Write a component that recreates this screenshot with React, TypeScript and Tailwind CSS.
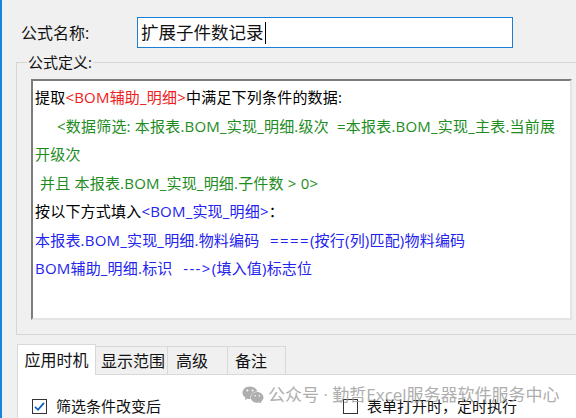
import { FaWeixin } from "react-icons/fa";

const RED = "text-[#f02020]";
const GREEN = "text-[#1e8c1e]";
const BLUE = "text-[#2323ee]";

function CheckBox({ checked }: { checked: boolean }) {
  return (
    <span className="flex h-[15px] w-[15px] items-center justify-center border border-[#333333] bg-white">
      {checked && (
        <svg width="13" height="13" viewBox="0 0 13 13">
          <path d="M2 6.8 L5 9.8 L11 2.8" fill="none" stroke="#0a62c4" strokeWidth="1.8" />
        </svg>
      )}
    </span>
  );
}

export default function App() {
  return (
    <div className="relative flex h-[418px] w-[576px] flex-col overflow-hidden border-l-2 border-[#1a82e2] bg-[#f0f0f0] font-['Open_Sans','Noto_Sans_CJK_SC',sans-serif] text-[#111111]">
      {/* name row */}
      <div className="flex items-center pl-[19px] pt-[17px]">
        <span className="w-[116px] text-[16px]">公式名称:</span>
        <div className="flex h-[31px] w-[376px] items-center border border-[#1a7fd6] bg-white pl-[3px] text-[17.5px]">
          <span>扩展子件数记录</span>
          <span className="ml-[1px] h-[22px] w-px bg-black" />
        </div>
      </div>

      {/* group box */}
      <fieldset className="mr-[-20px] ml-[14px] mt-[4px] border border-[#d6d6d6] px-0 pb-[14px] pt-[7px]">
        <legend className="ml-[10px] px-[1px] text-[15px] leading-[20px]">公式定义:</legend>
        <div className="ml-[14px] h-[241px] w-[541px] border-2 border-b-[#e4e4e4] border-l-[#7c7c7c] border-r-[#e4e4e4] border-t-[#7c7c7c] bg-white pl-[2px] pt-[2px] text-[15px] leading-[28.5px] tracking-[0.2px] text-black">
          <div className="whitespace-pre">
            提取<span className={RED}>&lt;BOM辅助_明细&gt;</span>中满足下列条件的数据:
          </div>
          <div className={`whitespace-pre pl-[22px] ${GREEN}`}>
            &lt;数据筛选: 本报表.BOM_实现_明细.级次  =本报表.BOM_实现_主表.当前展
          </div>
          <div className={GREEN}>开级次</div>
          <div className={`whitespace-pre pl-[5px] ${GREEN}`}>并且 本报表.BOM_实现_明细.子件数 &gt; 0&gt;</div>
          <div className="whitespace-pre">
            按以下方式填入<span className={BLUE}>&lt;BOM_实现_明细&gt;</span>：
          </div>
          <div className={`whitespace-pre ${BLUE}`}>
            本报表.BOM_实现_明细.物料编码<span className="tracking-[1.4px]">  ====</span>(按行(列)匹配)物料编码
          </div>
          <div className={`whitespace-pre ${BLUE}`}>
            BOM辅助_明细.标识<span className="tracking-[1.4px]">  ---&gt;</span>(填入值)标志位
          </div>
        </div>
      </fieldset>

      {/* tabs */}
      <div className="ml-[15px] mt-[9px] flex items-end text-[16px]">
        <div className="relative z-10 -mb-px flex h-[31px] w-[79px] items-center justify-center border border-b-0 border-[#d9d9d9] bg-white">
          应用时机
        </div>
        <div className="flex h-[28px] w-[72px] items-center border-r border-t border-[#d9d9d9] pl-[5px]">显示范围</div>
        <div className="flex h-[28px] w-[60px] items-center border-r border-t border-[#d9d9d9] pl-[8px]">高级</div>
        <div className="flex h-[28px] w-[58px] items-center border-r border-t border-[#d9d9d9] pl-[7px]">备注</div>
      </div>
      <div className="ml-[15px] flex-1 border-l border-t border-[#d9d9d9] bg-white pl-[14px] pt-[20px] text-[15px]">
        <div className="flex items-center">
          <div className="flex w-[311px] items-center gap-[9px]">
            <CheckBox checked />
            <span>筛选条件改变后</span>
          </div>
          <div className="flex items-center gap-[9px]">
            <CheckBox checked={false} />
            <span>表单打开时，定时执行</span>
          </div>
        </div>
      </div>

      {/* watermark */}
      <div className="pointer-events-none absolute left-[240px] top-[382px] flex items-center gap-[4px] text-[17px] text-[#9a9a9a] opacity-80">
        <FaWeixin size={22} />
        <span>公众号 · 勤哲Excel服务器软件服务中心</span>
      </div>
    </div>
  );
}
